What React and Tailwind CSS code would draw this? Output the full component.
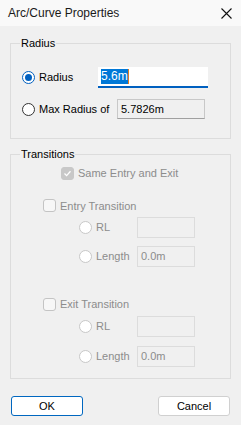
import React from 'react';

const Radio = ({ checked, disabled }) => (
  <span
    className={`w-[13px] h-[13px] rounded-full border flex items-center justify-center shrink-0 bg-white ${
      checked ? 'border-[#0060c0]' : disabled ? 'border-[#c8c8c8] bg-[#f7f7f7]' : 'border-[#333]'
    }`}
  >
    {checked && <span className="w-[7px] h-[7px] rounded-full bg-[#0060c0]" />}
  </span>
);

const Check = ({ checked }) => (
  <span
    className={`w-[13px] h-[13px] rounded-[3px] border flex items-center justify-center shrink-0 ${
      checked ? 'border-[#c8c8c8] bg-[#c8c8c8]' : 'border-[#c4c4c4] bg-[#f7f7f7]'
    }`}
  >
    {checked && (
      <svg width="9" height="9" viewBox="0 0 9 9">
        <path d="M1.5 4.5 L3.6 6.6 L7.5 2.2" fill="none" stroke="#fff" strokeWidth="1.3" />
      </svg>
    )}
  </span>
);

const Group = ({ label, className, children }) => (
  <div className={`relative mx-[10px] border border-[#dcdcdc] ${className}`}>
    <span className="absolute left-[9px] top-[-8px] bg-[#f0f0f0] px-[1px] leading-[14px] text-black">
      {label}
    </span>
    {children}
  </div>
);

const SubOption = ({ label, value, top }) => (
  <div className={`flex items-center h-[21px] ${top}`}>
    <div className="w-[126px] pl-[68px] flex items-center gap-[4px] text-[#8c8c8c]">
      <Radio disabled />
      <span>{label}</span>
    </div>
    <div className="w-[58px] h-[21px] border border-[#dcdcdc] pl-[3px] text-[#8c8c8c] leading-[19px]">
      {value}
    </div>
  </div>
);

export default function App() {
  return (
    <div
      className="w-[241px] h-[425px] bg-[#f0f0f0] text-[11px] text-black overflow-hidden"
      style={{ fontFamily: '"Liberation Sans", Arial, sans-serif' }}
    >
      <div className="h-[26px] bg-[#f9f9f9] flex items-center justify-between pl-[8px] pr-[9px]">
        <span className="text-[12px] text-[#1a1a1a]">Arc/Curve Properties</span>
        <svg width="11" height="11" viewBox="0 0 11 11">
          <path d="M0.5 0.5 L10.5 10.5 M10.5 0.5 L0.5 10.5" stroke="#111" strokeWidth="1.1" />
        </svg>
      </div>

      <Group label="Radius" className="mt-[17px] h-[96px]">
        <div className="flex items-center pl-[11px] pt-[23px]">
          <div className="w-[76px] flex items-center gap-[4px]">
            <Radio checked />
            <span>Radius</span>
          </div>
          <div className="w-[110px] h-[21px] bg-white border-b-2 border-[#0060c0] flex items-center pl-[3px]">
            <span className="bg-[#0078d7] text-white text-[12px] leading-[15px]">5.6m</span>
            <span className="w-[1px] h-[15px] bg-[#e07b20]" />
          </div>
        </div>
        <div className="flex items-center pl-[11px] pt-[11px]">
          <div className="w-[95px] flex items-center gap-[4px]">
            <Radio />
            <span>Max Radius of</span>
          </div>
          <div className="w-[88px] h-[20px] bg-[#f0f0f0] border border-[#c8c8c8] border-b-[#a0a0a0] flex items-center pl-[3px]">
            5.7826m
          </div>
        </div>
      </Group>

      <Group label="Transitions" className="mt-[15px] h-[225px]">
        <div className="flex items-center gap-[4px] pl-[50px] pt-[10px] text-[#8c8c8c]">
          <Check checked />
          <span>Same Entry and Exit</span>
        </div>
        <div className="flex items-center gap-[4px] pl-[32px] pt-[16px] text-[#8c8c8c]">
          <Check />
          <span>Entry Transition</span>
        </div>
        <SubOption label="RL" value="" top="mt-[3px]" />
        <SubOption label="Length" value="0.0m" top="mt-[8px]" />
        <div className="flex items-center gap-[4px] pl-[32px] pt-[29px] text-[#8c8c8c]">
          <Check />
          <span>Exit Transition</span>
        </div>
        <SubOption label="RL" value="" top="mt-[3px]" />
        <SubOption label="Length" value="0.0m" top="mt-[9px]" />
      </Group>

      <div className="flex justify-between px-[11px] pt-[17px]">
        <button className="w-[72px] h-[20px] bg-white border border-[#0067c0] rounded-[3px] text-[11px]">
          OK
        </button>
        <button className="w-[72px] h-[20px] bg-white border border-[#d0d0d0] rounded-[3px] text-[11px]">
          Cancel
        </button>
      </div>
    </div>
  );
}
